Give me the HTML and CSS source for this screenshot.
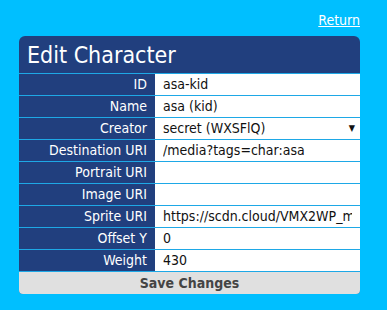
FILE: index.html
```html
<!DOCTYPE html>
<html lang="en">
<head>
    <meta charset="UTF-8">
    <meta name="viewport" content="width=device-width, initial-scale=1.0">
    <title>Edit Character</title>
    <link rel="stylesheet" href="styles.css">
</head>
<body>
    <div class="page">
        <div class="top-links">
            <a href="#">Return</a>
        </div>

        <!-- Character form -->
        <form class="card">
            <h1>Edit Character</h1>
            <div class="row">
                <label for="id">ID</label>
                <input type="text" id="id" value="asa-kid">
            </div>
            <div class="row">
                <label for="name">Name</label>
                <input type="text" id="name" value="asa (kid)">
            </div>
            <div class="row">
                <label for="creator">Creator</label>
                <div class="select">
                    <span>secret (WXSFlQ)</span>
                    <span class="arrow">&#9660;</span>
                </div>
            </div>
            <div class="row">
                <label for="dest">Destination URI</label>
                <input type="text" id="dest" value="/media?tags=char:asa">
            </div>
            <div class="row">
                <label for="portrait">Portrait URI</label>
                <input type="text" id="portrait" value="">
            </div>
            <div class="row">
                <label for="image">Image URI</label>
                <input type="text" id="image" value="">
            </div>
            <div class="row">
                <label for="sprite">Sprite URI</label>
                <input type="text" id="sprite" value="https://scdn.cloud/VMX2WP_mascot.png">
            </div>
            <div class="row">
                <label for="offset">Offset Y</label>
                <input type="text" id="offset" value="0">
            </div>
            <div class="row">
                <label for="weight">Weight</label>
                <input type="text" id="weight" value="430">
            </div>
            <button type="submit">Save Changes</button>
        </form>
    </div>
</body>
</html>
```

FILE: styles.css
```css
body {
    margin: 0;
    background: #00bfff;
    font-family: "DejaVu Sans Condensed", "DejaVu Sans", sans-serif;
    font-size: 14px;
}
.page {
    width: 341px;
    padding: 11px 0 0 19px;
}
.top-links {
    text-align: right;
    height: 25px;
    line-height: 18px;
}
.top-links a {
    color: white;
    text-decoration: underline;
}
.card {
    margin: 0;
    background: #213f7e;
    border-radius: 6px 6px 4px 4px;
    overflow: hidden;
}
h1 {
    margin: 0;
    height: 37px;
    padding-left: 8px;
    color: white;
    font-weight: normal;
    font-size: 23px;
    line-height: 38px;
}
.row {
    display: grid;
    grid-template-columns: 136px 1fr;
    height: 21px;
    border-top: 1px solid #1ea8e6;
}
.row label {
    color: white;
    text-align: right;
    padding-right: 8px;
    line-height: 21px;
}
.row input,
.select {
    border: none;
    margin: 0;
    padding: 0 8px;
    background: white;
    color: #111;
    font-family: inherit;
    font-size: 14px;
    height: 21px;
    line-height: 21px;
    min-width: 0;
    outline: none;
}
.select {
    display: flex;
    justify-content: space-between;
    padding-right: 5px;
}
.arrow {
    font-size: 9px;
}
button {
    display: block;
    width: 100%;
    height: 23px;
    border: none;
    border-top: 1px solid #1ea8e6;
    background: #e0e0e0;
    color: #444;
    font-family: inherit;
    font-weight: bold;
    font-size: 14px;
    cursor: pointer;
}
```
